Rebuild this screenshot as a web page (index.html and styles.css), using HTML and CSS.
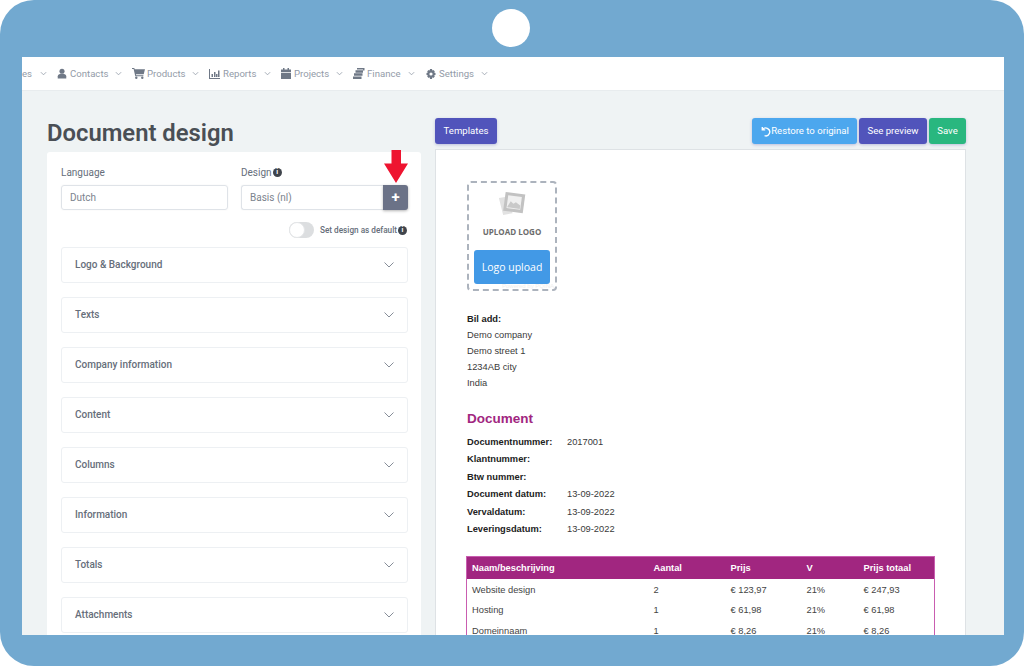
FILE: index.html
```html
<!DOCTYPE html>
<html lang="en">
<head>
<meta charset="utf-8">
<title>Document design</title>
<link rel="stylesheet" href="styles.css">
</head>
<body>
<div class="frame">
  <span class="camera"></span>
  <main class="screen">
    <nav class="nav">
      <span class="nav-item nav-first"><span class="nav-text">es</span><svg class="chev" viewBox="0 0 8 5"><path d="M1 1l3 3 3-3"/></svg></span>
      <span class="nav-item"><svg class="ico" width="10" height="11" viewBox="0 0 11 11"><circle cx="5.5" cy="3" r="2.8"/><path d="M.8 11V8.6C.8 7 2 6 3.4 6h4.2c1.4 0 2.6 1 2.6 2.6V11z"/></svg><span class="nav-text">Contacts</span><svg class="chev" viewBox="0 0 8 5"><path d="M1 1l3 3 3-3"/></svg></span>
      <span class="nav-item"><svg class="ico ico-wide" width="13" height="11" viewBox="0 0 13 11"><path d="M0 0h2.3l.4 1.2H13l-1.3 5H4l.2 1h7.2v1H3.300L1.600 1H0z"/><circle cx="4.300" cy="9.800" r="1.200"/><circle cx="10.300" cy="9.800" r="1.200"/></svg><span class="nav-text">Products</span><svg class="chev" viewBox="0 0 8 5"><path d="M1 1l3 3 3-3"/></svg></span>
      <span class="nav-item"><svg class="ico" width="11" height="10" viewBox="0 0 11 10"><path d="M0 0h1v9h10v1H0z"/><path d="M2.500 5h1.500v3H2.500zM5 3h1.500v5H5zM7 5h1.500v3H7zM9 1.500h1.500V8H9z"/></svg><span class="nav-text">Reports</span><svg class="chev" viewBox="0 0 8 5"><path d="M1 1l3 3 3-3"/></svg></span>
      <span class="nav-item"><svg class="ico" width="10" height="11" viewBox="0 0 10 11"><path d="M2 0h1.500v1.500h3V0H8v1.500h2V4H0V1.500h2zM0 4.800h10V11H0z"/></svg><span class="nav-text">Projects</span><svg class="chev" viewBox="0 0 8 5"><path d="M1 1l3 3 3-3"/></svg></span>
      <span class="nav-item"><svg class="ico ico-wide" width="12" height="11" viewBox="0 0 12 11"><path d="M4 0h7.500v2.500H10V1.500H4z"/><path d="M2.500 2.200H10v2.500H2.500zM1 5.300h8.500v2.500H1zM0 8.400h8.500V11H0z"/></svg><span class="nav-text">Finance</span><svg class="chev" viewBox="0 0 8 5"><path d="M1 1l3 3 3-3"/></svg></span>
      <span class="nav-item nav-last"><svg class="ico" width="10" height="10" viewBox="0 0 10 10"><path fill-rule="evenodd" d="M4 0h2l.3 1.400 1-.5 1.500 1.400-.6 1.100L9.500 4v2l-1.300.3.600 1.200-1.500 1.400-1-.6L6 10H4l-.3-1.700-1 .6L1.200 7.500l.6-1.200L.5 6V4l1.300-.6-.6-1.100L2.700.9l1 .5zM5 3.400a1.600 1.600 0 100 3.200 1.600 1.600 0 000-3.200z"/></svg><span class="nav-text">Settings</span><svg class="chev" viewBox="0 0 8 5"><path d="M1 1l3 3 3-3"/></svg></span>
    </nav>

    <div class="content">
      <section class="left">
        <h1 class="title">Document design</h1>
        <div class="card">
          <div class="fields">
            <div class="field">
              <label class="label">Language</label>
              <div class="input">Dutch</div>
            </div>
            <div class="field">
              <label class="label">Design<span class="info">i</span></label>
              <div class="input-group">
                <div class="input input-joined">Basis (nl)</div>
                <button class="plus">+</button>
              </div>
            </div>
          </div>
          <div class="default-row">
            <span class="toggle"><span class="knob"></span></span>
            <span class="default-text">Set design as default</span><span class="info">i</span>
          </div>
          <div class="acc"><span>Logo &amp; Background</span><svg class="acc-chev" viewBox="0 0 10 6"><path d="M.5.5L5 5 9.500.5"/></svg></div>
          <div class="acc"><span>Texts</span><svg class="acc-chev" viewBox="0 0 10 6"><path d="M.5.5L5 5 9.500.5"/></svg></div>
          <div class="acc"><span>Company information</span><svg class="acc-chev" viewBox="0 0 10 6"><path d="M.5.5L5 5 9.500.5"/></svg></div>
          <div class="acc"><span>Content</span><svg class="acc-chev" viewBox="0 0 10 6"><path d="M.5.5L5 5 9.500.5"/></svg></div>
          <div class="acc"><span>Columns</span><svg class="acc-chev" viewBox="0 0 10 6"><path d="M.5.5L5 5 9.500.5"/></svg></div>
          <div class="acc"><span>Information</span><svg class="acc-chev" viewBox="0 0 10 6"><path d="M.5.5L5 5 9.500.5"/></svg></div>
          <div class="acc"><span>Totals</span><svg class="acc-chev" viewBox="0 0 10 6"><path d="M.5.5L5 5 9.500.5"/></svg></div>
          <div class="acc"><span>Attachments</span><svg class="acc-chev" viewBox="0 0 10 6"><path d="M.5.5L5 5 9.500.5"/></svg></div>
        </div>
      </section>

      <section class="right">
        <div class="toolbar">
          <button class="btn btn-indigo btn-templates">Templates</button>
          <div class="toolbar-group">
            <button class="btn btn-blue btn-restore"><svg class="undo" viewBox="0 0 12 12"><path d="M2.500 1v3.200h3.200M2.800 4A4.300 4.300 0 115 10.600"/></svg>Restore to original</button>
            <button class="btn btn-indigo btn-preview">See preview</button>
            <button class="btn btn-green btn-save">Save</button>
          </div>
        </div>
        <div class="doc">
          <div class="logo-box">
            <svg class="logo-ico" width="29" height="28" viewBox="0 0 34 30"><path d="M1 9l13-2 3 20-11 2z" fill="#e2e2e2"/><path d="M9 2l23 3-3 22-23-3z" fill="#c2c2c2"/><path d="M12 6l16 2-2 15-16-2z" fill="#f0f0f0"/><path d="M11 19l4-6 3 3 3-2 5 4-.5 4-14.500-2z" fill="#c9c9c9"/></svg>
            <div class="logo-caption">UPLOAD LOGO</div>
            <button class="logo-btn">Logo upload</button>
            <div class="powered">Powered by PQINA</div>
          </div>

          <div class="addr">
            <strong>Bil add:</strong>
            <div>Demo company</div>
            <div>Demo street 1</div>
            <div>1234AB city</div>
            <div>India</div>
          </div>

          <h2 class="doc-title">Document</h2>

          <dl class="meta">
            <dt>Documentnummer:</dt><dd>2017001</dd>
            <dt>Klantnummer:</dt><dd></dd>
            <dt>Btw nummer:</dt><dd></dd>
            <dt>Document datum:</dt><dd>13-09-2022</dd>
            <dt>Vervaldatum:</dt><dd>13-09-2022</dd>
            <dt>Leveringsdatum:</dt><dd>13-09-2022</dd>
          </dl>

          <table class="items">
            <thead>
              <tr><th class="c1">Naam/beschrijving</th><th class="c2">Aantal</th><th class="c3">Prijs</th><th class="c4">V</th><th>Prijs totaal</th></tr>
            </thead>
            <tbody>
              <tr><td>Website design</td><td>2</td><td>€ 123,97</td><td>21%</td><td>€ 247,93</td></tr>
              <tr><td>Hosting</td><td>1</td><td>€ 61,98</td><td>21%</td><td>€ 61,98</td></tr>
              <tr><td>Domeinnaam</td><td>1</td><td>€ 8,26</td><td>21%</td><td>€ 8,26</td></tr>
            </tbody>
          </table>
        </div>
      </section>
    </div>
  </main>
  <svg class="arrow" width="24" height="33" viewBox="0 0 24 33"><path d="M7.500 0h9.500v13.500h7L12 33 0 13.500h7.500z"/></svg>
</div>
</body>
</html>
```
FILE: styles.css
```css
* { box-sizing: border-box; }
html, body { margin: 0; height: 100%; background: #fff; }
body { font-family: Roboto, "Noto Sans", sans-serif; overflow: hidden; }

.frame {
  position: relative;
  width: 1024px;
  height: 666px;
  padding: 57px 20px 31px 22px;
  background: #72a9d0;
  border-radius: 34px;
}
.camera {
  position: absolute;
  left: 492px;
  top: 9px;
  width: 38px;
  height: 38px;
  background: #fff;
  border-radius: 50%;
}
.arrow { position: absolute; left: 384px; top: 150px; fill: #ee1430; }

.screen {
  height: 578px;
  background: #eff3f4;
  overflow: hidden;
}

.nav {
  display: flex;
  align-items: center;
  height: 34px;
  background: #fff;
  border-bottom: 1px solid #e8ecee;
  color: #939ba8;
  font-size: 9.600px;
  white-space: nowrap;
  gap: 10px;
}
.nav-item { display: flex; align-items: center; }
.nav-first { width: 25px; }
.nav-last { margin-left: 1px; }
.nav-item .ico { fill: #6f7886; margin-right: 3px; flex: none; }
.nav-item .ico-wide { margin-right: 2px; }
.nav-text { width: 38px; }
.nav-item:nth-child(1) .nav-text { width: 18px; overflow: hidden; }
.nav-item:nth-child(4) .nav-text { width: 34px; }
.nav-item:nth-child(5) .nav-text { width: 35px; }
.nav-item:nth-child(6) .nav-text { width: 34px; }
.nav-item:nth-child(7) .nav-text { width: 35px; }
.chev {
  width: 7px;
  height: 5px;
  margin-left: 7px;
  fill: none;
  stroke: #9aa2ae;
  stroke-width: 1;
  flex: none;
}
.nav-first .chev { margin-left: 0; }

.content {
  display: flex;
  gap: 14px;
  padding: 27px 38px 0 25px;
  height: 544px;
}

.left { width: 374px; flex: none; }
.title {
  margin: 0;
  height: 34px;
  font-size: 23.800px;
  line-height: 30px;
  font-weight: 600;
  color: #4a4f55;
}
.card {
  background: #fff;
  border-radius: 3px;
  padding: 14px 13px 14px 14px;
  height: 560px;
}
.fields { display: flex; gap: 13px; }
.field { flex: 1; min-width: 0; }
.field:first-child { flex: 0 0 167px; }
.label {
  display: flex;
  align-items: center;
  height: 19px;
  padding-bottom: 7px;
  font-size: 10px;
  color: #666e7a;
}
.info {
  display: inline-flex;
  align-items: center;
  justify-content: center;
  width: 9px;
  height: 9px;
  margin-left: 1px;
  border-radius: 50%;
  background: #3f444c;
  color: #fff;
  font-size: 7px;
  font-weight: 700;
  line-height: 1;
}
.input {
  height: 25px;
  display: flex;
  align-items: center;
  padding-left: 8px;
  border: 1px solid #dfe3e8;
  border-radius: 3px;
  font-size: 10px;
  color: #7c838e;
  box-shadow: 0 0 2px rgba(0,0,0,.06);
}
.input-group { display: flex; }
.input-joined { flex: 1; border-right: 0; border-radius: 3px 0 0 3px; }
.plus {
  width: 25px;
  height: 25px;
  padding: 0;
  border: 0;
  border-radius: 0 3px 3px 0;
  background: #6b7287;
  color: #fff;
  font: 700 15px/25px Roboto, sans-serif;
  box-shadow: 0 1px 3px rgba(0,0,0,.3);
}
.default-row {
  display: flex;
  align-items: center;
  justify-content: flex-end;
  height: 16px;
  margin: 12px 1px 9px 0;
}
.default-text { font-size: 8.200px; font-weight: 500; color: #666e7a; margin-left: 6px; }
.toggle {
  position: relative;
  width: 25px;
  height: 16px;
  border-radius: 8px;
  background: #dcdee0;
}
.knob {
  position: absolute;
  left: 0;
  top: 0;
  width: 16px;
  height: 16px;
  border-radius: 50%;
  background: #fff;
  border: 1px solid #e4e6e8;
}
.acc {
  display: flex;
  align-items: center;
  justify-content: space-between;
  height: 36px;
  margin-bottom: 14px;
  padding: 0 13px 1px;
  border: 1px solid #edf0f3;
  border-radius: 3px;
  font-size: 10px;
  font-weight: 500;
  color: #666e7a;
}
.acc-chev { width: 10px; height: 6px; fill: none; stroke: #868d98; stroke-width: 1; }

.right { width: 531px; flex: none; }
.toolbar { display: flex; justify-content: space-between; height: 31px; }
.toolbar-group { display: flex; gap: 2px; }
.btn {
  display: flex;
  align-items: center;
  justify-content: center;
  height: 26px;
  padding: 0;
  border: 0;
  border-radius: 3px;
  color: #fff;
  font: 400 9.600px/1 Roboto, sans-serif;
  white-space: nowrap;
  box-shadow: 0 1px 3px rgba(70,70,160,.3);
}
.btn-templates { width: 62px; }
.btn-restore { width: 105px; }
.btn-preview { width: 68px; }
.btn-save { width: 37px; }
.btn-indigo { background: #5154bb; }
.btn-blue { background: #4ca7ee; }
.btn-green { background: #29b77f; }
.undo { width: 11px; height: 11px; fill: none; stroke: #fff; stroke-width: 1.500; }
.doc {
  height: 520px;
  background: #fff;
  border: 1px solid #dee2e5;
  padding: 31px 30px 0 31px;
  font-family: "Liberation Sans", Arial, sans-serif;
  font-size: 9.300px;
  color: #3a3a3a;
}
.logo-box {
  position: relative;
  width: 90px;
  height: 110px;
  border: 2px dashed #acb3bd;
  border-radius: 4px;
  padding: 6px 5px 0;
  text-align: center;
}
.logo-ico { display: block; margin: 0 auto; }
.logo-caption {
  margin-top: 9px;
  font: 700 8px/12px "Open Sans", sans-serif;
  color: #6c6c6c;
}
.logo-btn {
  display: block;
  width: 76px;
  height: 34px;
  margin-top: 12px;
  padding: 0;
  border: 0;
  border-radius: 3px;
  background: #4299e6;
  color: #fff;
  font: 400 10.500px/34px "Open Sans", sans-serif;
}
.powered {
  position: absolute;
  left: 0;
  right: 1px;
  bottom: -1px;
  font-size: 6px;
  line-height: 7px;
  text-align: right;
  color: #eee;
}
.addr { margin-top: 20px; line-height: 16px; }
.addr strong { color: #222; display: block; }
.doc-title {
  margin: 18px 0 0;
  font-size: 13.500px;
  line-height: 20px;
  font-weight: 700;
  color: #a12680;
}
.meta {
  display: grid;
  grid-template-columns: 100px 1fr;
  grid-auto-rows: 17.500px;
  align-items: center;
  margin: 4px 0 0;
}
.meta dt { font-weight: 700; color: #222; }
.meta dd { margin: 0; }
.items {
  width: 469px;
  margin: 18px 0 0 -1px;
  border-collapse: collapse;
  table-layout: fixed;
  border: 1px solid #c95db0;
}
.items th {
  height: 22px;
  padding: 0 0 0 5px;
  background: #a12680;
  color: #fff;
  font-size: 9.300px;
  font-weight: 700;
  text-align: left;
}
.items td { height: 21px; padding: 0 0 0 5px; color: #444; }
.items tbody tr:first-child td { padding-top: 1px; }
.c1 { width: 182px; }
.c2 { width: 77px; }
.c3 { width: 76px; }
.c4 { width: 57px; }
```
